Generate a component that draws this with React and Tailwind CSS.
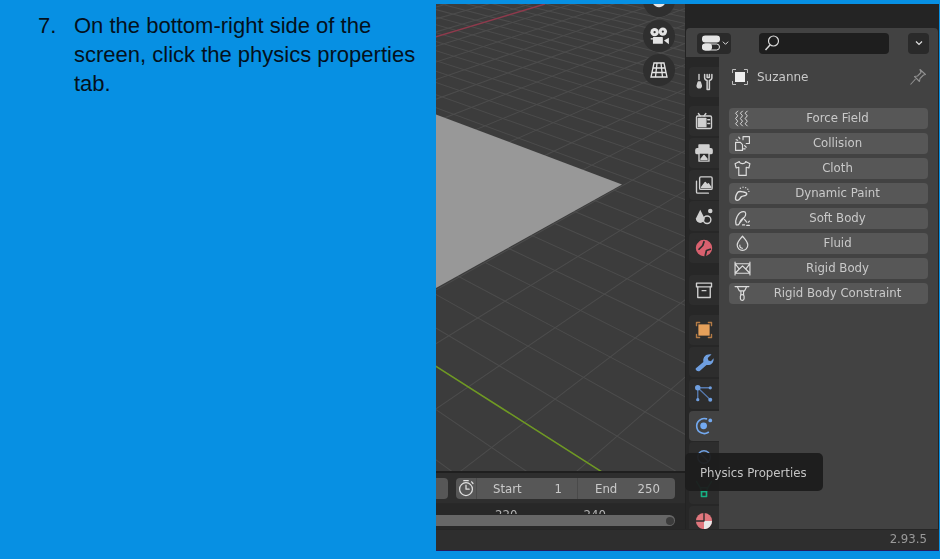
const blender = { fontFamily: '"DejaVu Sans", sans-serif' };

// ground plane grid: lines of one family cross a line parallel to the horizon at equal steps
const vpA = [-527, -246];
const vpB = [1415, -257];

function gridLines(vp, anchor, step, count) {
  const lines = [];
  for (let i = -count; i <= count; i++) {
    const x = anchor + i * step;
    const t = 4;
    lines.push({ x1: vp[0], y1: vp[1], x2: vp[0] + (x - vp[0]) * t, y2: vp[1] + (300 - vp[1]) * t });
  }
  return lines;
}

function Viewport() {
  const lines = [...gridLines(vpA, 333, 57, 30), ...gridLines(vpB, 595, 89, 30)];
  return (
    <svg viewBox="436 4 249 466" className="block h-full w-full" preserveAspectRatio="none">
      <rect x="436" y="4" width="249" height="466" fill="#3c3c3c" />
      {lines.map((l, i) => (
        <line key={i} x1={l.x1} y1={l.y1} x2={l.x2} y2={l.y2} stroke="#4c4c4c" strokeWidth="1" />
      ))}
      <polygon points="435,114 622,184 435,288" fill="#989898" />
      <line x1="435" y1="37" x2="545" y2="4" stroke="#8e3a4c" strokeWidth="1.500" />
      <line x1="435" y1="365" x2="602" y2="471" stroke="#6f9a22" strokeWidth="1.500" />
    </svg>
  );
}

function Icon({ children, className = 'text-[#d0d0d0]', size = 20 }) {
  return (
    <svg viewBox="0 0 16 16" width={size} height={size} fill="none" stroke="currentColor" strokeWidth="1.100" strokeLinecap="round" strokeLinejoin="round" className={className}>
      {children}
    </svg>
  );
}

const objectCorners = 'M2 4.500V2h2.500M11.500 2H14v2.500M14 11.500V14h-2.500M4.500 14H2v-2.500';

const tabs = [
  {
    gap: 'mt-0',
    items: [
      { key: 'tool', icon: <Icon><path d="M4 2v4" /><path d="M2.500 11a1.700 1.700 0 0 0 3.400 0L5 8H3.400z" fill="currentColor" /><path d="M8.500 2v2.500c0 1.200.8 2 2 2.300V14h1.800V6.800c1.200-.3 2-1.100 2-2.300V2M10.500 2v2.300h1.800V2" strokeWidth="1.200" /></Icon> },
    ],
  },
  {
    gap: 'mt-[9px]',
    items: [
      { key: 'render', icon: <Icon><path d="M5 4 3.500 2M8 4l1.500-2" /><rect x="2" y="4" width="12" height="10" rx="1" /><path d="M11 7h1.500M11 10h1.500" /><rect x="3.500" y="6" width="6" height="6.500" fill="currentColor" /></Icon> },
      { key: 'output', icon: <Icon><rect x="4" y="1.500" width="8" height="3" fill="currentColor" /><rect x="1.500" y="4.500" width="13" height="4" rx="1" fill="currentColor" /><rect x="4" y="8" width="8" height="6.500" fill="#2d2d2d" /><path d="M5.500 13 8 10l2.500 3z" fill="currentColor" /></Icon> },
      { key: 'view', icon: <Icon><path d="M2 5v8.500a1 1 0 0 0 1 1h8.500" /><rect x="4.500" y="1.500" width="10" height="10" rx="1" /><path d="m6 10 3-4 1.500 2 1-1 2 3z" fill="currentColor" /></Icon> },
      { key: 'scene', icon: <Icon><path d="M5 3 1.500 10a3.200 3.200 0 0 0 7 0z" fill="currentColor" stroke="none" /><circle cx="10.500" cy="11" r="3" /><circle cx="13" cy="4" r="1.800" fill="currentColor" stroke="none" /></Icon> },
      { key: 'world', icon: <Icon className="text-[#d9616f]"><circle cx="8" cy="8" r="6" fill="currentColor" /><path d="M3 3 2 1.500M13.500 13.500l1 1M4 9l3-3 1-3M9 14l1-4 3-1" stroke="#2d2d2d" strokeWidth="1.400" /></Icon> },
    ],
  },
  {
    gap: 'mt-[12px]',
    items: [
      { key: 'collection', icon: <Icon><rect x="2" y="2.500" width="12" height="3" /><path d="M3 5.500V14h10V5.500M6.500 8.500h3" /></Icon> },
    ],
  },
  {
    gap: 'mt-[10px]',
    items: [
      { key: 'object', icon: <Icon className="text-[#b27a45]"><path d={objectCorners} /><rect x="3.500" y="3.500" width="9" height="9" fill="#e5a05a" stroke="none" /></Icon> },
      { key: 'modifier', icon: <Icon className="text-[#6f9fe0]"><path d="M1.500 13 7.500 8C6.800 4.500 9.500 1 14 2L11 4.800l.5 2 2 .5 2.200-2.300C16 9 13 11 10 10.300L4.800 15c-1.600 1.200-4.300-.5-3.300-2z" fill="currentColor" stroke="none" /></Icon> },
      { key: 'particles', icon: <Icon className="text-[#6f9fe0]"><path d="M3 3h10M3 3v9.500M3 3l10 9.500" stroke="#5679ad" /><circle cx="3" cy="3" r="2.200" fill="currentColor" stroke="none" /><circle cx="13" cy="3" r="1.300" fill="currentColor" stroke="none" /><circle cx="3" cy="12.500" r="1.300" fill="currentColor" stroke="none" /><circle cx="13" cy="12.500" r="1.600" fill="currentColor" stroke="none" /></Icon> },
      { key: 'physics', active: true, icon: <Icon className="text-[#73a9f0]"><path d="M11.500 13A6 6 0 1 1 10 2.300" strokeWidth="1.300" /><circle cx="7.700" cy="7.800" r="2.700" fill="currentColor" stroke="none" /><circle cx="13" cy="3.500" r="1.500" fill="currentColor" stroke="none" /></Icon> },
      { key: 'constraints', icon: <Icon className="text-[#6f9fe0]"><circle cx="8" cy="8" r="5" /><path d="M5 5 11 11" /></Icon> },
      { key: 'data', icon: <Icon className="text-[#16b184]"><path d="M2 2 5 7h6l3-5M5 7l1 3h4l1-3" /><rect x="6" y="10" width="4" height="4" strokeWidth="1.300" /></Icon> },
      { key: 'material', icon: <Icon className="text-[#e0767d]"><circle cx="8" cy="8" r="6.500" fill="currentColor" stroke="none" /><path d="M8 8h6.400A6.500 6.500 0 0 1 8 14.500z" fill="#e8e8e8" stroke="none" /><path d="M8 1.500V8H1.500" stroke="#2d2d2d" /></Icon> },
    ],
  },
];

const physicsButtons = [
  { label: 'Force Field', icon: <path d="M3.500 1 1.500 3l2 2.500-2 2.500 2 2.500-2 2.500 2 2M8 1 6 3l2 2.500L6 8l2 2.500L6 13l2 2M12.500 1l-2 2 2 2.500-2 2.500 2 2.500-2 2.500 2 2" strokeWidth="0.900" /> },
  { label: 'Collision', icon: <path d="M8.500 1.500h6v6.500h-3M8.500 1.500v3M1.500 7v7.500h6.500V9L6 7zM4.500 2l1 1.500M2 4.500l1.500.5M10 10l1.500 1.500M9 13h1.500" /> },
  { label: 'Cloth', icon: <path d="M5 1.500 1 3.500l1 4 2.500-.7v7.700h7V6.800L14 7.500l1-4-4-2c-.5 2.500-5.500 2.500-6 0z" /> },
  { label: 'Dynamic Paint', icon: <path d="M3.500 7c1-1.500 3-1 5-.5 2 .4 3.500.5 3.500 2 0 2-3.500 1.500-5 2.500s-1.500 3.500-4 3.500c-2.500 0-1.500-4-.5-6zM6 3h.01M8.500 2h.01M11 2.500h.01M13 4h.01M14 6h.01" strokeWidth="1.300" /> },
  { label: 'Soft Body', icon: <path d="M2 14C.5 9 4 1.500 9 1.500c2.500 0 2.500 3 1 5L4 14zM5 13c.5-3 2.500-5 5-6.500M10 9l2 2.500M14.500 10.500l-1 1M8 14h2M12 14.500h2.500" /> },
  { label: 'Fluid', icon: <><path d="M8 1c2 3 5 5 5 8.500a5 5 0 0 1-10 0C3 6 6 4 8 1z" /><path d="M5.500 9.500A2.500 2.500 0 0 0 8 12.500" /></> },
  { label: 'Rigid Body', icon: <path d="M1 2v12M15 2v12M1 3.500h14M1 12.500h14M1 3.500l4 5 3-3 3 3 4-5M1 12.500 5 8.500M15 12.500l-4-4" /> },
  { label: 'Rigid Body Constraint', icon: <><path d="M1 1.500h13M3 1.500l2 4h5l2-4M6.500 5.500v3.500M9 5.500v3.500" /><rect x="6" y="9" width="3.500" height="5.500" rx="1.700" /></> },
];

function SearchHeader() {
  return (
    <div className="flex h-[29px] shrink-0 items-center pl-[11px] pr-[9px] pt-[1px]">
      <div className="flex h-[21px] w-[34px] items-center gap-[2px] rounded-[4px] bg-[#2a2a2a] pl-[5px] text-[#e4e4e4]">
        <svg viewBox="0 0 18 16" width="18" height="16" fill="currentColor">
          <rect x="0" y="0.500" width="18" height="7" rx="3.300" />
          <rect x="0.500" y="9" width="17" height="6" rx="3" fill="none" stroke="currentColor" />
          <rect x="0" y="8.500" width="10" height="7" rx="3.300" />
        </svg>
        <svg viewBox="0 0 8 6" width="7" height="6" fill="none" stroke="currentColor" strokeWidth="1.100"><path d="m1 1.500 3 3 3-3" /></svg>
      </div>
      <div className="ml-[28px] flex h-[21px] w-[130px] items-center rounded-[4px] bg-[#1e1e1e] pl-[4px] text-[#d8d8d8]">
        <svg viewBox="0 0 18 18" width="18" height="18" fill="none" stroke="currentColor" strokeWidth="1.200"><circle cx="10.500" cy="7" r="5" /><path d="M7 11 2.500 16" strokeWidth="1.500" /></svg>
      </div>
      <div className="ml-[19px] flex h-[21px] w-[21px] items-center justify-center rounded-[4px] bg-[#2a2a2a] text-[#e0e0e0]">
        <svg viewBox="0 0 8 6" width="8" height="6" fill="none" stroke="currentColor" strokeWidth="1.200"><path d="m1 1.500 3 3 3-3" /></svg>
      </div>
    </div>
  );
}

function TabStrip() {
  return (
    <div className="flex h-full w-[33px] shrink-0 flex-col overflow-hidden bg-[#272727] pl-[3px] pt-[10px]">
      {tabs.map((group) => (
        <div key={group.items[0].key} className={`flex shrink-0 flex-col gap-[1.8px] ${group.gap}`}>
          {group.items.map((tab) => (
            <div key={tab.key} className={`flex h-[30px] shrink-0 items-center justify-center rounded-l-[4px] pr-[1px] ${tab.active ? 'bg-[#424242]' : 'bg-[#2d2d2d]'}`}>
              {tab.icon}
            </div>
          ))}
        </div>
      ))}
    </div>
  );
}

function PhysicsPanel() {
  return (
    <div className="min-w-0 flex-1 px-[10px]">
      <div className="flex h-[40px] items-center pl-[1px] pr-[1px]">
        <Icon size={20} className="text-[#bcbcbc]"><path d={objectCorners} strokeWidth="0.800" /><rect x="4" y="4" width="8" height="8" fill="#eeeeee" stroke="none" /></Icon>
        <span className="ml-[7px] flex-1 text-[12px] text-[#c9c9c9]">Suzanne</span>
        <svg viewBox="0 0 18 18" width="18" height="18" fill="none" stroke="#8f8f8f" strokeWidth="1.100" strokeLinejoin="round"><path d="m11 1.500 5.500 5-2 .5-3.500 3.500-.5 3-5-5 3-.5L12 4.500zM6.500 11 1.500 16.500" /></svg>
      </div>
      <div className="mt-[11px] flex flex-col gap-[4px]">
        {physicsButtons.map((button) => (
          <div key={button.label} className="relative flex h-[21px] items-center justify-center rounded-[4px] bg-[#575757] pl-[18px] text-[11.75px] text-[#c9c9c9]">
            <span className="absolute left-[5px] top-[2px]"><Icon size={17} className="text-[#dddddd]">{button.icon}</Icon></span>
            {button.label}
          </div>
        ))}
      </div>
    </div>
  );
}

function Timeline() {
  return (
    <div className="flex h-[58px] shrink-0 flex-col border-t-2 border-[#1f1f1f] bg-[#2e2e2e] text-[11.75px] text-[#c9c9c9]">
      <div className="flex h-[30px] shrink-0 items-center pb-[1px] pt-[1px]">
        <div className="h-[21px] w-[12px] rounded-r-[4px] bg-[#575757]" />
        <div className="ml-[8px] flex h-[21px] w-[219px] items-center rounded-[4px] bg-[#575757]">
          <div className="flex h-full w-[21px] items-center justify-center border-r border-[#4a4a4a]">
            <Icon size={18} className="text-[#e0e0e0]"><circle cx="8" cy="9" r="5.700" /><path d="M8 5.500V9h2.800M6 1.500h4M13 2.500l1.200 1.500" /></Icon>
          </div>
          <div className="flex h-full w-[101px] items-center justify-between border-r border-[#4a4a4a] pl-[16px] pr-[15px] pt-[3px]">
            <span>Start</span><span>1</span>
          </div>
          <div className="flex flex-1 items-center justify-between pl-[17px] pr-[15px] pt-[3px]">
            <span>End</span><span>250</span>
          </div>
        </div>
      </div>
      <div className="relative flex-1 overflow-hidden border-t border-[#292929] bg-[#282828] pt-[1px]">
        <div className="flex h-[9px] items-start overflow-hidden pl-[59px] text-[11.75px] leading-[20px] text-[#b4b4b4]">
          <span>220</span>
          <span className="ml-[66px]">240</span>
        </div>
        <div className="mt-[1px] flex h-[11px] w-[239px] items-center justify-end rounded-r-full bg-[#676767] pr-[1px]">
          <div className="h-[8px] w-[8px] rounded-full bg-[#3c3c3c]" />
        </div>
      </div>
    </div>
  );
}

export default function App() {
  return (
    <div className="relative flex h-[559px] w-[940px] overflow-hidden bg-[#0790e3]">
      <div className="w-[436px] shrink-0 pl-[38px] pt-[11px] text-[22px] leading-[29px] text-[#04111c]" style={{ fontFamily: '"Liberation Sans", Arial, sans-serif' }}>
        <div className="flex">
          <span className="w-[36px] shrink-0">7.</span>
          <p className="w-[345px]">On the bottom-right side of the screen, click the physics properties tab.</p>
        </div>
      </div>
      <div className="relative mt-[4px] flex h-[547px] w-[503px] shrink-0 flex-col overflow-hidden border-b border-[#2a1a5e] bg-[#232323] blur-[0.35px]" style={blender}>
        <div className="flex min-h-0 flex-1">
          <div className="flex w-[249px] shrink-0 flex-col">
            <div className="relative min-h-0 flex-1 overflow-hidden">
              <Viewport />
              <div className="absolute left-[207px] top-[-19px] flex h-[32px] w-[32px] items-center justify-center rounded-full bg-[#2f2f2f]">
                <svg viewBox="0 0 16 16" width="20" height="20" fill="#e4e4e4"><path d="M2 0h12v6c0 3-2 7-6 7S2 9 2 6z" /></svg>
              </div>
              <div className="absolute left-[207px] top-[16px] flex h-[32px] w-[32px] items-center justify-center rounded-full bg-[#2f2f2f]">
                <svg viewBox="0 0 20 20" width="22" height="22" fill="#e4e4e4"><circle cx="6" cy="6.500" r="3.800" /><circle cx="13.500" cy="6" r="3.800" /><circle cx="6" cy="6.500" r="1" fill="#2f2f2f" /><circle cx="13.500" cy="6" r="1" fill="#2f2f2f" /><rect x="4.500" y="11" width="9" height="6" rx="0.500" /><path d="m14.500 14 4.500-2.500v6z" /><rect x="2.500" y="12" width="2" height="1.200" /></svg>
              </div>
              <div className="absolute left-[207px] top-[50px] flex h-[32px] w-[32px] items-center justify-center rounded-full bg-[#2f2f2f]">
                <svg viewBox="0 0 20 20" width="20" height="20" fill="none" stroke="#e4e4e4" strokeWidth="1.300"><path d="M5 3h10l3 14H2zM3.700 8h12.600M2.800 12.500h14.400M8 3l-1.500 14M12 3l1.500 14" /></svg>
              </div>
            </div>
            <Timeline />
          </div>
          <div className="flex min-w-0 flex-1 flex-col px-[1px]">
            <div className="h-[24px] shrink-0 bg-[#242424]" />
            <div className="flex min-h-0 flex-1 flex-col overflow-hidden rounded-t-[4px] bg-[#424242]">
              <SearchHeader />
              <div className="flex min-h-0 flex-1">
                <TabStrip />
                <PhysicsPanel />
              </div>
            </div>
          </div>
        </div>
        <div className="flex h-[21px] shrink-0 items-center justify-end border-t border-[#262626] bg-[#2e2e2e] pr-[12px] text-[11.75px] text-[#9a9a9a]">
          2.93.5
        </div>
      </div>
      <div className="absolute left-[685px] top-[453px] flex h-[38px] w-[138px] items-center rounded-[5px] bg-[#1c1c1c]/95 pl-[15px] pt-[3px] text-[11.75px] text-[#c4c4c4] blur-[0.3px]" style={blender}>
        Physics Properties
      </div>
    </div>
  );
}
